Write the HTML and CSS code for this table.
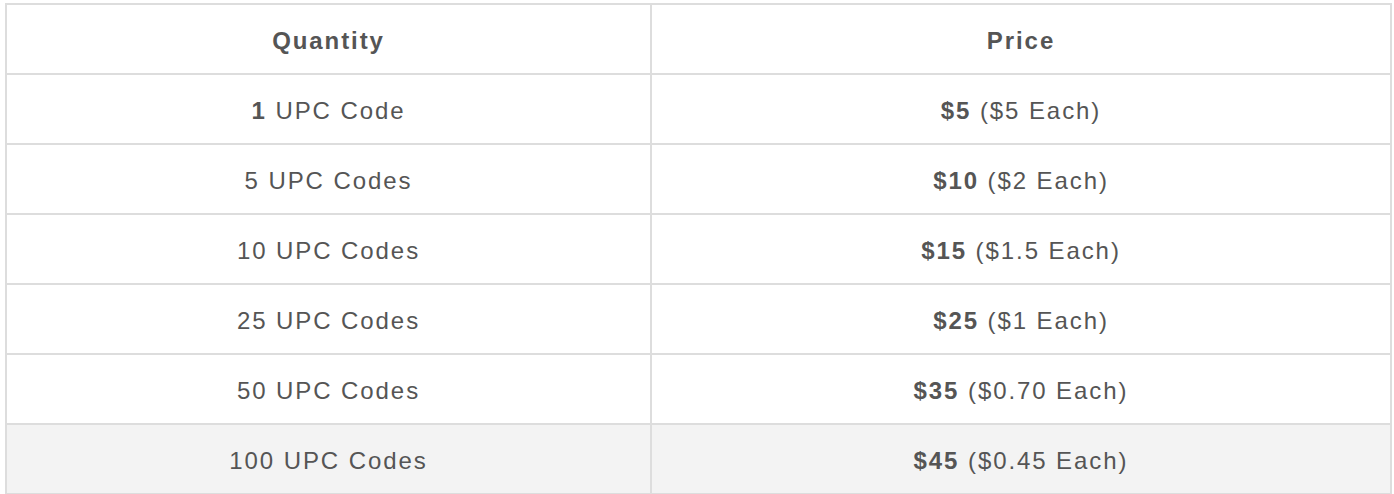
FILE: index.html
```html
<!DOCTYPE html>
<html>
<head>
<meta charset="utf-8">
<link rel="stylesheet" href="styles.css">
</head>
<body>
<table class="price-table">
  <thead>
    <tr><th class="col-qty">Quantity</th><th class="col-price">Price</th></tr>
  </thead>
  <tbody>
    <tr><td><b>1</b> UPC Code</td><td><b>$5</b> ($5 Each)</td></tr>
    <tr><td>5 UPC Codes</td><td><b>$10</b> ($2 Each)</td></tr>
    <tr><td>10 UPC Codes</td><td><b>$15</b> ($1.5 Each)</td></tr>
    <tr><td>25 UPC Codes</td><td><b>$25</b> ($1 Each)</td></tr>
    <tr><td>50 UPC Codes</td><td><b>$35</b> ($0.70 Each)</td></tr>
    <tr class="row-alt"><td>100 UPC Codes</td><td><b>$45</b> ($0.45 Each)</td></tr>
  </tbody>
</table>
</body>
</html>
```
FILE: styles.css
```css
html, body {
  margin: 0;
  padding: 0;
  background: #ffffff;
}
body {
  padding: 3px 0 0 5px;
  font-family: "Liberation Sans", Arial, sans-serif;
  color: #555555;
}
.price-table {
  border-collapse: separate;
  border-spacing: 0;
  border-top: 2px solid #dddddd;
  border-left: 2px solid #dddddd;
  table-layout: fixed;
  width: 1387px;
}
.col-qty { width: 643px; }
.col-price { width: auto; }
.price-table th,
.price-table td {
  height: 65px;
  padding: 3px 0 0 0;
  text-align: center;
  vertical-align: middle;
  border-right: 2px solid #dddddd;
  border-bottom: 2px solid #dddddd;
  font-size: 24px;
  letter-spacing: 0.08em;
}
.price-table th {
  font-weight: bold;
}
.price-table b {
  font-weight: bold;
}
.row-alt td {
  background: #f3f3f3;
}
```
